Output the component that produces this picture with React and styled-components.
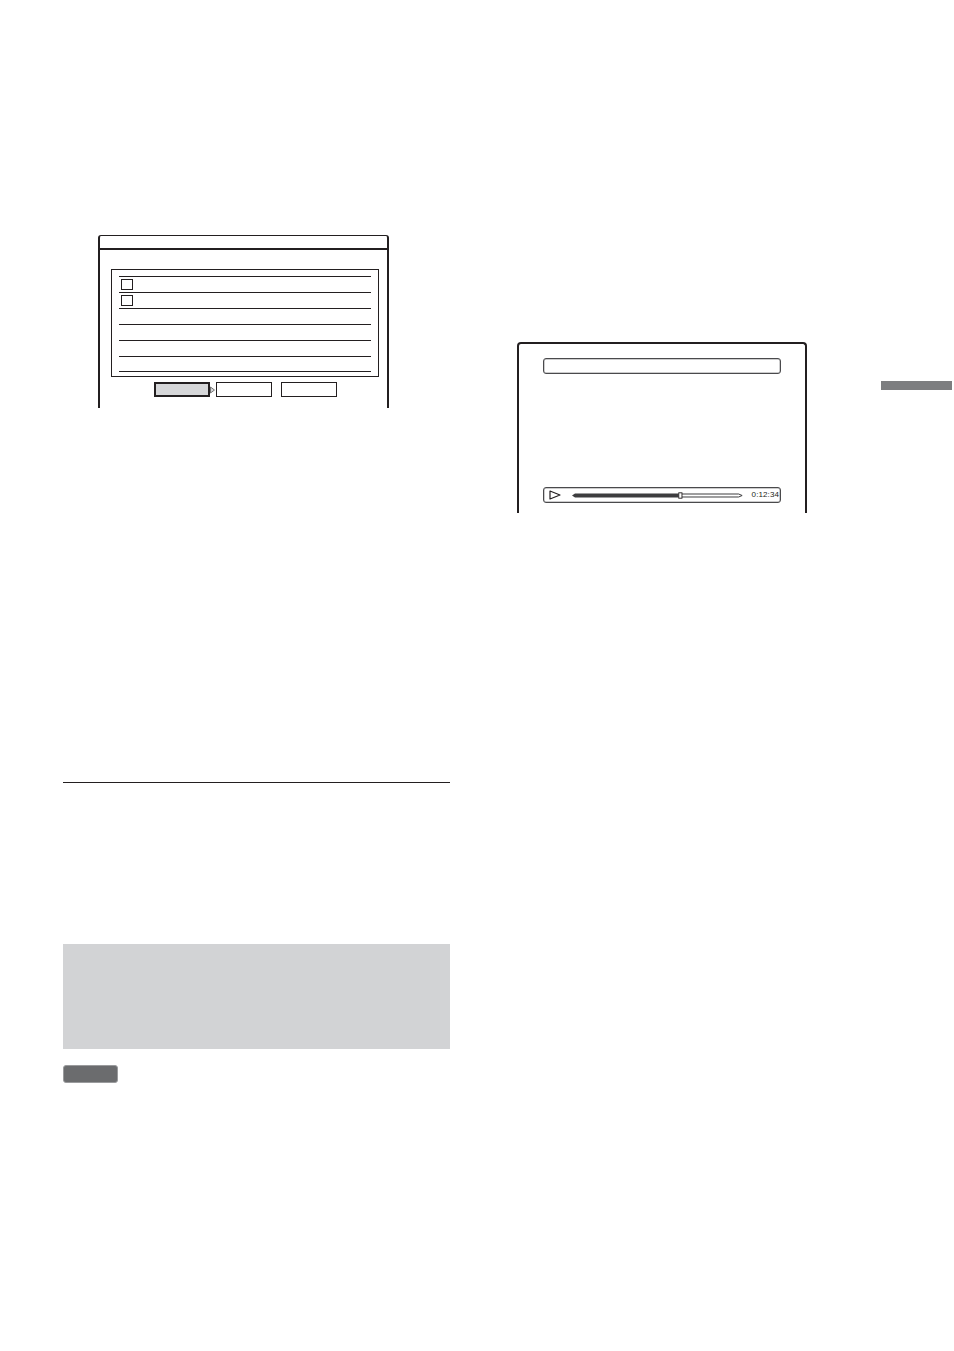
import React from 'react';
import styled, { createGlobalStyle } from 'styled-components';

const Global = createGlobalStyle`
  html, body {
    margin: 0;
    padding: 0;
    background: #fff;
  }
  body {
    font-family: "Liberation Sans", Arial, sans-serif;
  }
`

const Page = styled.div`
  display: grid;
  grid-template-columns: 63px 387px 67px 290px 74px 71px 2px;
  width: 954px;
  height: 1351px;
  background: #fff;
`

const Column = styled.div`
  grid-column: ${p => p.col};
  padding-top: ${p => p.top}px;
  display: flex;
  flex-direction: column;
`

/* left: list screen */
const ListScreen = styled.div`
  margin-left: 35px;
  width: 291px;
  height: 173px;
  box-sizing: border-box;
  border: 2px solid #231f20;
  border-top-width: 1.5px;
  border-bottom: none;
  border-radius: 3px 3px 0 0;
  display: flex;
  flex-direction: column;
`

const ScreenHeader = styled.div`
  height: 12px;
  border-bottom: 2px solid #231f20;
`

const ListBox = styled.div`
  margin: 19px 8px 0 11px;
  height: 108px;
  box-sizing: border-box;
  border: 1.5px solid #231f20;
  padding: 5.5px 7px 0 7px;
`

const Row = styled.div`
  height: 16px;
  box-sizing: border-box;
  border-top: 1px solid #231f20;
  border-bottom: ${p => (p.last ? '1px solid #231f20' : 'none')};
  display: flex;
  align-items: center;
  padding-left: 2px;
`

const Check = styled.span`
  width: 12px;
  height: 11px;
  box-sizing: border-box;
  border: 1px solid #231f20;
  background: #fff;
`

const ButtonRow = styled.div`
  display: flex;
  align-items: center;
  margin: 5px 0 0 54px;
`

const Btn = styled.div`
  width: 56px;
  height: 15px;
  box-sizing: border-box;
  border: ${p => (p.active ? '2px solid #231f20' : '1.2px solid #231f20')};
  background: ${p => (p.active ? '#d6d7d9' : '#fff')};
  margin-left: ${p => p.gap || 0}px;
`

const Pointer = styled.svg`
  display: block;
  width: 5px;
  height: 8px;
`

const Rule = styled.div`
  margin-top: 374px;
  height: 1.3px;
  background: #231f20;
`

const NoteBox = styled.div`
  margin-top: 161px;
  height: 105px;
  background: #d2d3d5;
`

const Badge = styled.div`
  margin-top: 16px;
  width: 55px;
  height: 18px;
  box-sizing: border-box;
  border-radius: 3px;
  background: #6b6c6e;
  border: 1px solid #9a9b9d;
`

/* right: playback screen */
const PlayScreen = styled.div`
  width: 290px;
  height: 171px;
  box-sizing: border-box;
  border: 2px solid #231f20;
  border-bottom: none;
  border-radius: 4px 4px 0 0;
  padding: 14px 24px 0 24px;
  display: flex;
  flex-direction: column;
  justify-content: space-between;
`

const Bar = styled.div`
  height: 16px;
  box-sizing: border-box;
  border: 1px solid #4a4a4c;
  border-radius: 3px;
  box-shadow: inset 0 0 0 0.5px #9a9a9c;
  display: flex;
  align-items: center;
  padding: 0 1px 0 5px;
  margin-bottom: ${p => p.bottom || 0}px;
`

const Time = styled.span`
  margin-left: 9px;
  font-size: 8px;
  letter-spacing: 0.1px;
  color: #231f20;
  line-height: 1;
`

const Tab = styled.div`
  height: 9px;
  background: #7d7e80;
`

const PlayIcon = () => (
  <svg width="12" height="10" viewBox="0 0 12 10">
    <path d="M1 1 L11 5 L1 9 Z" fill="none" stroke="#231f20" strokeWidth="1.2" strokeLinejoin="round" />
  </svg>
)

const Progress = () => (
  <svg width="171" height="7" viewBox="0 0 171 7" style={{ display: 'block' }}>
    <path d="M0 3.5 L3 1.5 L107 1.5 L107 5.5 L3 5.5 Z" fill="#3d3d3f" />
    <path d="M110 2 L167 2 L170.5 3.5 L167 5 L110 5" fill="none" stroke="#3d3d3f" strokeWidth="1" />
    <rect x="107" y="0.8" width="3.2" height="5.4" fill="#fff" stroke="#231f20" strokeWidth="0.9" />
  </svg>
)

export default function App() {
  const rows = [true, true, false, false, false, false];

  return (
    <Page>
      <Global />
      <Column col={2} top={235}>
        <ListScreen>
          <ScreenHeader />
          <ListBox>
            {rows.map((checked, i) => (
              <Row key={i} last={i === rows.length - 1}>
                {checked && <Check />}
              </Row>
            ))}
          </ListBox>
          <ButtonRow>
            <Btn active />
            <Pointer viewBox="0 0 5 8">
              <path d="M0.5 1 L4.5 4 L0.5 7 Z" fill="#d6d7d9" stroke="#555" strokeWidth="0.8" />
            </Pointer>
            <Btn gap={1} />
            <Btn gap={9} />
          </ButtonRow>
        </ListScreen>
        <Rule />
        <NoteBox />
        <Badge />
      </Column>

      <Column col={4} top={342}>
        <PlayScreen>
          <Bar />
          <Bar bottom={10}>
            <PlayIcon />
            <span style={{ width: 11 }} />
            <Progress />
            <Time>0:12:34</Time>
          </Bar>
        </PlayScreen>
      </Column>

      <Column col={6} top={381}>
        <Tab />
      </Column>
    </Page>
  );
}
